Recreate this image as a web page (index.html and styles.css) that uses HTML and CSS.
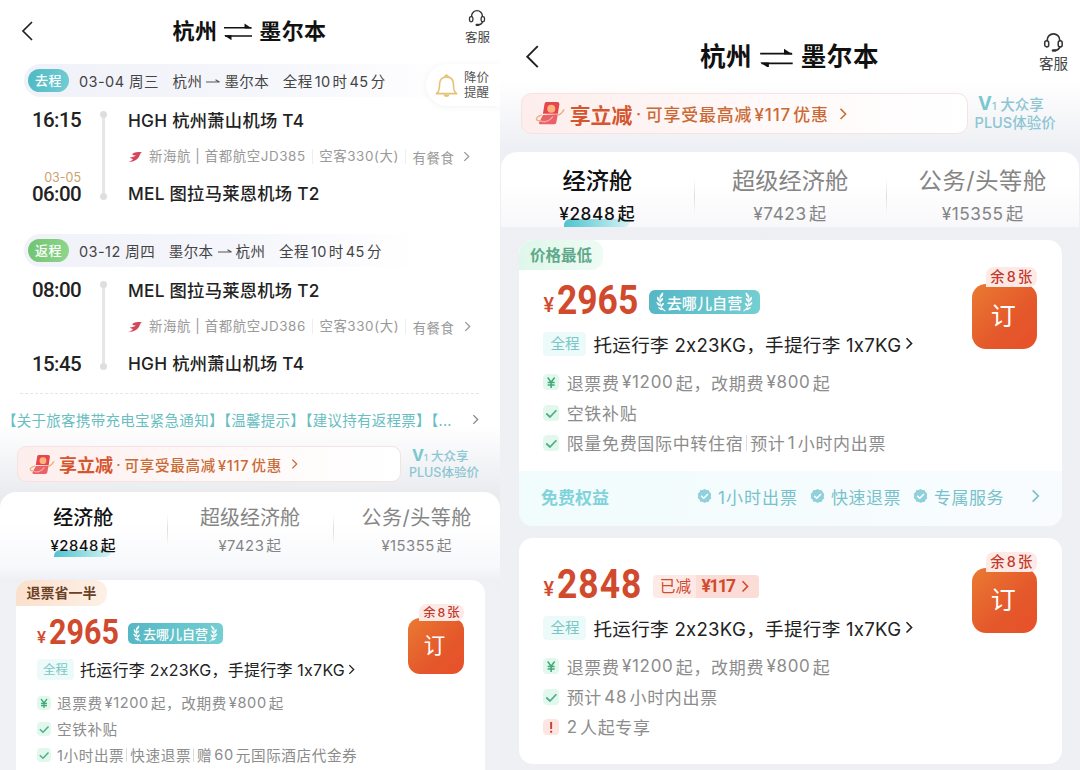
FILE: index.html
```html
<!DOCTYPE html>
<html lang="zh-CN">
<head>
    <meta charset="UTF-8">
    <meta name="viewport" content="width=device-width, initial-scale=1.0">
    <title>杭州 - 墨尔本</title>
    <link rel="stylesheet" href="styles.css">
</head>
<body>
    <svg class="sprite">
        <symbol id="back" viewBox="0 0 12 20"><path d="M11 1 2 10l9 9" fill="none" stroke="#222" stroke-width="1.7"/></symbol>
        <symbol id="swap" viewBox="0 0 30 18"><path d="M1 5.7h27.5M29 14H2" fill="none" stroke="#111" stroke-width="1.5"/><path d="M21.5 1.5 29 6.4h-7.5zM8.5 18.2 1 13.3h7.5z" fill="#111"/></symbol>
        <symbol id="headset" viewBox="0 0 18 18"><path d="M3.6 8V7a5.4 5.4 0 0 1 10.8 0v1M14.6 12.5c-.4 2-1.8 3.2-4.6 3.4" fill="none" stroke="#333" stroke-width="1.4"/><rect x="1.5" y="7.6" width="3.4" height="5.2" rx="1.7" fill="none" stroke="#333" stroke-width="1.3"/><rect x="13.1" y="7.6" width="3.4" height="5.2" rx="1.7" fill="none" stroke="#333" stroke-width="1.3"/><rect x="7.5" y="14.8" width="4" height="2.2" rx="1.1" fill="#333"/></symbol>
        <symbol id="right" viewBox="0 0 8 12"><path d="m1.5 1 5 5-5 5" fill="none" stroke="currentColor" stroke-width="1.5"/></symbol>
        <symbol id="bell" viewBox="0 0 24 26"><path d="M1.5 22c2.5-2 3.2-3.5 3.2-9 0-5 2.5-8.5 7.3-8.5s7.3 3.5 7.3 8.5c0 5.5.7 7 3.2 9z" fill="none" stroke="#e5c273" stroke-width="1.7" stroke-linejoin="round"/><path d="M10.3 4.5a1.7 1.9 0 0 1 3.4 0" fill="none" stroke="#e5c273" stroke-width="1.5"/><path d="M9 23h6a3 2.5 0 0 1-6 0z" fill="#e5c273"/></symbol>
        <symbol id="airline" viewBox="0 0 14 12"><path d="M0 11c2.5-.6 4.2-1.6 5-3C3.500 7.700 2.300 7.300 1.800 6.600 4.300 6.400 6.500 5.600 8 4.600 6.500 4.600 4.800 4 4 3.200 6.500 1 10 .6 14 1.500c-1.600.5-1.800 1.500-2.400 3C10.300 8 7 11 0 11z" fill="#d5465a"/></symbol>
        <symbol id="arrow" viewBox="0 0 14 6"><path d="M0 4h13.5L9.500 1.800" fill="none" stroke="#555" stroke-width="1.1"/></symbol>
        <symbol id="packet" viewBox="0 0 26 22"><path d="M9.5 1h10q2 0 1.8 2l-1.3 8.5H6.500L8 2.500Q8.300 1 9.500 1z" fill="#e3474b"/><path d="m6.500 12.500 13.500-.5-1.500 7.500q-.3 1.500-2 1.500h-12q-2 0-1.500-1.500z" fill="#ea6268"/><path d="M4 18c4 1.500 8 .5 11.500-4" fill="none" stroke="#f5a8a2" stroke-width="1.2"/><circle cx="14" cy="7" r="3.6" fill="#ffb27c"/><path d="M5.500 12.500C-1 15-.5 18.500 4.500 17.500M19.500 13c2.500-.8 4.500-2.300 6-5.500" fill="none" stroke="#eeb07a" stroke-width="1.3"/></symbol>
        <symbol id="yen" viewBox="0 0 14 14"><rect width="14" height="14" rx="4" fill="#e2f8ed"/><path d="m4 3 3 4 3-4M7 7v5M4 7.3h6M4 9.5h6" fill="none" stroke="#3fa978" stroke-width="1.3"/></symbol>
        <symbol id="check" viewBox="0 0 14 14"><rect width="14" height="14" rx="4" fill="#e2f8ed"/><path d="m2.8 7.3 3.2 3 5.5-5.8" fill="none" stroke="#4fae8b" stroke-width="1.5"/></symbol>
        <symbol id="warn" viewBox="0 0 14 14"><rect width="14" height="14" rx="4" fill="#fde6e1"/><path d="M7 2.5v6M7 10v1.8" fill="none" stroke="#c9432f" stroke-width="1.7"/></symbol>
        <symbol id="seal" viewBox="0 0 16 16"><path d="m8 .6 2.2 1 2.4.3.9 2.2 1.7 1.8-.5 2.3.5 2.3-1.8 1.6-1 2.2-2.4.2L8 15.4l-2-1.2-2.4-.2-1-2.2L.8 10.200l.5-2.300L.8 5.900l1.700-1.800.9-2.200 2.400-.3z" fill="#8fd0da"/><path d="m4.500 7.800 2.700 2.600 4.500-4.600" fill="none" stroke="#fff" stroke-width="1.7"/></symbol>
        <symbol id="laurel" viewBox="0 0 9 18"><path d="M8.500 17.500C4.500 15 2.500 9.500 4 3" fill="none" stroke="#fff" stroke-width="1"/><path d="M3.800 5.500C3.300 3.500 4.500 1.300 6.500.3c.5 2.200-.5 4.300-2.700 5.200zM3 9C1.200 8 .5 6 1 4.200 2.800 5.200 3.600 7 3 9zM3.200 9.500c0-2 1.200-3.500 3.300-4 .2 2-1.200 3.500-3.300 4zM4 13C1.800 12.500.5 11 .3 9 2.500 9.500 3.900 11 4 13zM4.300 13.200c0-1.800 1.200-3.200 3-3.500.2 1.900-1.200 3.200-3 3.500zM6.500 16.500c-2.200.2-3.800-.8-4.800-2.600 2.200-.1 4 .7 4.800 2.600z" fill="#fff"/></symbol>
    </svg>

    <div class="screens">
        <!-- flight detail -->
        <section class="screen screen-detail">
            <header class="head">
                <svg class="back"><use href="#back"/></svg>
                <h1>杭州<svg class="swap"><use href="#swap"/></svg>墨尔本</h1>
                <div class="service"><svg><use href="#headset"/></svg><span>客服</span></div>
            </header>

            <div class="trip">
                <div class="leg-bar">
                    <b class="pill go">去程</b>
                    <span class="date">03-04 周三</span>
                    <span class="route">杭州<svg><use href="#arrow"/></svg>墨尔本</span>
                    <span class="total">全程<i>10</i>时<i>45</i>分</span>
                </div>
                <div class="alert"><svg><use href="#bell"/></svg><span>降价<br>提醒</span></div>
                <div class="leg">
                    <div class="times"><time>16:15</time><small>03-05</small><time>06:00</time></div>
                    <div class="line"></div>
                    <div class="stops">
                        <strong>HGH 杭州萧山机场 T4</strong>
                        <p><svg class="logo"><use href="#airline"/></svg><span class="air">新海航 | 首都航空JD385</span><span class="plane">空客330(大)</span><span>有餐食</span><svg class="more"><use href="#right"/></svg></p>
                        <strong>MEL 图拉马莱恩机场 T2</strong>
                    </div>
                </div>
                <div class="leg-bar second">
                    <b class="pill return">返程</b>
                    <span class="date">03-12 周四</span>
                    <span class="route">墨尔本<svg><use href="#arrow"/></svg>杭州</span>
                    <span class="total">全程<i>10</i>时<i>45</i>分</span>
                </div>
                <div class="leg">
                    <div class="times"><time>08:00</time><time>15:45</time></div>
                    <div class="line"></div>
                    <div class="stops">
                        <strong>MEL 图拉马莱恩机场 T2</strong>
                        <p><svg class="logo"><use href="#airline"/></svg><span class="air">新海航 | 首都航空JD386</span><span class="plane">空客330(大)</span><span>有餐食</span><svg class="more"><use href="#right"/></svg></p>
                        <strong>HGH 杭州萧山机场 T4</strong>
                    </div>
                </div>
            </div>

            <div class="notice"><span>【关于旅客携带充电宝紧急通知】【温馨提示】【建议持有返程票】【...</span><svg><use href="#right"/></svg></div>

            <div class="promo">
                <div class="coupon">
                    <svg class="packet"><use href="#packet"/></svg><b>享立减</b><em>·</em><span>可享受最高减<i>¥117</i>优惠</span><svg class="more"><use href="#right"/></svg>
                </div>
                <div class="plus"><p><b>V</b><sub>1</sub> 大众享</p><p>PLUS体验价</p></div>
            </div>

            <div class="tabs">
                <div class="tab active"><h2>经济舱</h2><p>¥2848<i>起</i></p></div>
                <div class="tab"><h2>超级经济舱</h2><p>¥7423<i>起</i></p></div>
                <div class="tab"><h2>公务/头等舱</h2><p>¥15355<i>起</i></p></div>
            </div>

            <article class="card">
                <span class="corner brown">退票省一半</span>
                <div class="price"><small>¥</small><strong>2965</strong>
                    <span class="self"><svg><use href="#laurel"/></svg>去哪儿自营<svg class="flip"><use href="#laurel"/></svg></span>
                </div>
                <div class="bags"><span>全程</span><p>托运行李 2x23KG，手提行李 1x7KG</p><svg><use href="#right"/></svg></div>
                <ul>
                    <li><svg><use href="#yen"/></svg>退票费<i>¥1200</i>起，改期费<i>¥800</i>起</li>
                    <li><svg><use href="#check"/></svg>空铁补贴</li>
                    <li><svg><use href="#check"/></svg>1小时出票<u></u>快速退票<u></u>赠<i>60</i>元国际酒店代金券</li>
                </ul>
                <div class="book"><button>订</button><span>余<i>8</i>张</span></div>
            </article>
        </section>

        <!-- fare list -->
        <section class="screen screen-fares">
            <header class="head">
                <svg class="back"><use href="#back"/></svg>
                <h1>杭州<svg class="swap"><use href="#swap"/></svg>墨尔本</h1>
                <div class="service"><svg><use href="#headset"/></svg><span>客服</span></div>
            </header>

            <div class="promo">
                <div class="coupon">
                    <svg class="packet"><use href="#packet"/></svg><b>享立减</b><em>·</em><span>可享受最高减<i>¥117</i>优惠</span><svg class="more"><use href="#right"/></svg>
                </div>
                <div class="plus"><p><b>V</b><sub>1</sub> 大众享</p><p>PLUS体验价</p></div>
            </div>

            <div class="tabs">
                <div class="tab active"><h2>经济舱</h2><p>¥2848<i>起</i></p></div>
                <div class="tab"><h2>超级经济舱</h2><p>¥7423<i>起</i></p></div>
                <div class="tab"><h2>公务/头等舱</h2><p>¥15355<i>起</i></p></div>
            </div>

            <article class="card with-benefits">
                <span class="corner green">价格最低</span>
                <div class="price"><small>¥</small><strong>2965</strong>
                    <span class="self"><svg><use href="#laurel"/></svg>去哪儿自营<svg class="flip"><use href="#laurel"/></svg></span>
                </div>
                <div class="bags"><span>全程</span><p>托运行李 2x23KG，手提行李 1x7KG</p><svg><use href="#right"/></svg></div>
                <ul>
                    <li><svg><use href="#yen"/></svg>退票费<i>¥1200</i>起，改期费<i>¥800</i>起</li>
                    <li><svg><use href="#check"/></svg>空铁补贴</li>
                    <li><svg><use href="#check"/></svg>限量免费国际中转住宿<u></u>预计<i>1</i>小时内出票</li>
                </ul>
                <div class="benefits">
                    <b>免费权益</b>
                    <span><svg><use href="#seal"/></svg>1小时出票</span>
                    <span><svg><use href="#seal"/></svg>快速退票</span>
                    <span><svg><use href="#seal"/></svg>专属服务</span>
                    <svg class="more"><use href="#right"/></svg>
                </div>
                <div class="book"><button>订</button><span>余<i>8</i>张</span></div>
            </article>

            <article class="card last">
                <div class="price"><small>¥</small><strong>2848</strong>
                    <span class="cut"><span>已减</span><b>¥117<svg><use href="#right"/></svg></b></span>
                </div>
                <div class="bags"><span>全程</span><p>托运行李 2x23KG，手提行李 1x7KG</p><svg><use href="#right"/></svg></div>
                <ul>
                    <li><svg><use href="#yen"/></svg>退票费<i>¥1200</i>起，改期费<i>¥800</i>起</li>
                    <li><svg><use href="#check"/></svg>预计<i>48</i>小时内出票</li>
                    <li><svg><use href="#warn"/></svg>2<i class="gap"></i>人起专享</li>
                </ul>
                <div class="book"><button>订</button><span>余<i>8</i>张</span></div>
            </article>
        </section>
    </div>
</body>
</html>
```

FILE: styles.css
```css
* {
    box-sizing: border-box;
    margin: 0;
    padding: 0;
}
body {
    width: 1080px;
    height: 770px;
    overflow: hidden;
    background: #fff;
    font-family: Inter, "Noto Sans CJK SC", sans-serif;
    color: #222;
}
i, em {
    font-style: normal;
}
svg {
    display: block;
    flex: none;
}
.sprite {
    position: absolute;
    width: 0;
    height: 0;
}
.screens {
    display: flex;
}
/* --u is one design pixel, the fare list is shown larger */
.screen {
    --u: 1px;
    width: 500px;
    height: 770px;
    overflow: hidden;
    display: flex;
    flex-direction: column;
    background: linear-gradient(#fff 425px, #e9ebef 495px, #eff1f5 600px);
}
.screen-fares {
    --u: 1.163px;
    width: 580px;
    background: linear-gradient(#fff 80px, #eeeff4 150px, #eff0f4 300px);
}

/* header */
.head {
    height: 62px;
    flex: none;
    display: flex;
    align-items: center;
    justify-content: space-between;
    padding: 0 10px 0 21px;
}
.screen-fares .head {
    height: 93px;
    padding: 21px 12px 0 25px;
}
.back {
    width: calc(12 * var(--u));
    height: calc(20 * var(--u));
}
.head h1 {
    display: flex;
    align-items: center;
    font-size: calc(22 * var(--u));
    font-weight: 700;
    line-height: 1;
    letter-spacing: calc(0.4 * var(--u));
    color: #111;
    padding-left: 1px;
}
.swap {
    width: calc(30 * var(--u));
    height: calc(18 * var(--u));
    margin: 0 calc(6 * var(--u));
}
.service {
    display: flex;
    flex-direction: column;
    align-items: center;
    gap: calc(3 * var(--u));
    font-size: calc(12.5 * var(--u));
    line-height: calc(15 * var(--u));
    color: #444;
    margin-top: -9px;
}
.service svg {
    width: calc(18 * var(--u));
    height: calc(18 * var(--u));
}

/* trip legs */
.trip {
    position: relative;
    height: 331px;
    flex: none;
    padding-top: 2px;
}
.leg-bar {
    height: 33px;
    margin: 0 20px 0 24px;
    padding-left: 4px;
    display: flex;
    align-items: center;
    border-radius: 17px;
    background: linear-gradient(90deg, #f1f2f9 0, #f5f6fb 50%, #fff 95%);
    font-size: 14.5px;
    letter-spacing: 0.45px;
    color: #444;
    white-space: nowrap;
}
.leg-bar.second {
    margin-top: 21px;
    margin-right: 60px;
}
.pill {
    width: 41px;
    height: 23px;
    border-radius: 12px;
    color: #fff;
    font-size: 13px;
    font-weight: 500;
    line-height: 22px;
    text-align: center;
}
.go {
    background: linear-gradient(100deg, #4fb9c4, #71cdd3);
}
.return {
    background: linear-gradient(100deg, #70c470, #8fd68d);
}
.leg-bar .date {
    margin: 0 13.5px 0 10px;
}
.route {
    display: flex;
    align-items: center;
    margin-right: 13.5px;
}
.route svg {
    width: 14px;
    height: 6px;
    margin: 0 4px;
}
.total i {
    margin: 0 2px;
}
.alert {
    position: absolute;
    right: 0;
    top: 2px;
    width: 74px;
    height: 42px;
    padding-left: 9px;
    display: flex;
    align-items: center;
    gap: 6px;
    background: #fff;
    border-radius: 21px 0 0 21px;
    box-shadow: 0 1px 6px rgba(60, 70, 120, 0.07);
    font-size: 12.5px;
    line-height: 15.5px;
    color: #555;
}
.alert svg {
    width: 23px;
    height: 26px;
}
.leg {
    height: 116px;
    display: flex;
}
.times {
    width: 81px;
    display: flex;
    flex-direction: column;
    text-align: right;
    padding-top: 13px;
    height: 107px;
}
.times time {
    font: 500 20.5px/20px Roboto, sans-serif;
    letter-spacing: -0.6px;
}
.times time:last-child {
    margin-top: auto;
}
.times small {
    margin-top: auto;
    margin-bottom: 1px;
    font-size: 12.5px;
    line-height: 12px;
    color: #c9a36b;
}
.times small + time:last-child {
    margin-top: 0;
    line-height: 18px;
    margin-bottom: 1px;
}
.line {
    width: 3px;
    height: 87px;
    margin: 15px 23px 0 21px;
    background: #e6e6e9;
    position: relative;
}
.line::before, .line::after {
    content: "";
    position: absolute;
    left: -2px;
    top: -1px;
    width: 7px;
    height: 7px;
    border-radius: 50%;
    background: #dedee1;
}
.line::after {
    top: auto;
    bottom: -1px;
}
.stops {
    height: 107px;
    padding-top: 12px;
    white-space: nowrap;
}
.stops strong {
    display: block;
    font-size: 17.3px;
    font-weight: 500;
    line-height: 23px;
    letter-spacing: 0.25px;
}
.stops p {
    display: flex;
    align-items: center;
    height: 50px;
    padding-bottom: 1px;
    font-size: 13.4px;
    letter-spacing: 0.6px;
    color: #999;
}
.logo {
    width: 14px;
    height: 12px;
    margin-right: 7px;
}
.stops .air, .stops .plane {
    margin-right: 6.5px;
    padding-right: 6px;
    border-right: 1px solid #eee;
    line-height: 15px;
}
.stops .more {
    width: 7px;
    height: 11px;
    margin-left: 9px;
}

/* notice */
.notice {
    flex: none;
    height: 53px;
    margin: 0 21px 0 20px;
    padding-bottom: 1px;
    border-top: 1px dashed #e6e6e6;
    display: flex;
    align-items: center;
    justify-content: space-between;
    font-size: 14.5px;
    color: #68bec1;
    white-space: nowrap;
}
.notice span {
    margin-left: -18px;
    letter-spacing: 0.28px;
}
.notice svg {
    width: 7px;
    height: 11px;
    color: #888;
}

/* coupon line */
.promo {
    flex: none;
    display: flex;
    align-items: center;
    height: 36px;
    margin: 0 0 10px 17px;
}
.screen-fares .promo {
    height: 41px;
    margin: 0 0 18px 21px;
}
.coupon {
    width: calc(384 * var(--u));
    height: 100%;
    display: flex;
    align-items: center;
    padding-left: calc(11 * var(--u));
    border: 1px solid #f6e2e2;
    border-radius: calc(9 * var(--u));
    background: linear-gradient(90deg, #fdeeed, #fff9f9 55%, #fff);
    color: #c96a35;
    font-size: calc(14.5 * var(--u));
    font-weight: 500;
    letter-spacing: calc(0.75 * var(--u));
    white-space: nowrap;
}
.packet {
    width: calc(26 * var(--u));
    height: calc(21 * var(--u));
}
.coupon b {
    margin-left: calc(4 * var(--u));
    font-size: calc(18 * var(--u));
    font-weight: 700;
    letter-spacing: 0;
    color: #d5562e;
}
.coupon em {
    width: calc(11.5 * var(--u));
    text-align: center;
}
.coupon i {
    margin: 0 calc(2 * var(--u));
}
.coupon .more {
    width: calc(7 * var(--u));
    height: calc(12 * var(--u));
    margin-left: calc(9 * var(--u));
}
.plus {
    margin-left: calc(8 * var(--u));
    font-size: calc(12.5 * var(--u));
    line-height: calc(15 * var(--u));
    font-weight: 500;
    color: #8dc6d3;
    white-space: nowrap;
}
.screen-fares .plus {
    margin-left: 7px;
}
.plus p:first-child {
    padding-left: calc(3 * var(--u));
}
.plus b {
    font-size: calc(16 * var(--u));
    color: #79c7d0;
}
.plus sub {
    font-size: calc(9 * var(--u));
    vertical-align: baseline;
}

/* cabin tabs */
.tabs {
    flex: none;
    height: 88px;
    display: flex;
    border-radius: 16px 16px 0 0;
    background: linear-gradient(#fff 30px, #f7f8fb 75px, transparent);
    text-align: center;
    color: #858585;
    white-space: nowrap;
}
.screen-fares .tabs {
    height: 75px;
    margin: 0 1px 13px;
    background: linear-gradient(#fff 30px, #f8f8fb);
}
.tab {
    flex: 1;
    position: relative;
    padding-top: calc(11.5 * var(--u));
}
.tab + .tab::before {
    content: "";
    position: absolute;
    left: 0;
    top: calc(22 * var(--u));
    width: 1px;
    height: calc(32 * var(--u));
    background: linear-gradient(transparent, #ddd, transparent);
}
.tab h2 {
    font-size: calc(20 * var(--u));
    font-weight: 400;
    line-height: calc(28 * var(--u));
}
.tab:last-child h2 {
    letter-spacing: calc(0.5 * var(--u));
}
.tab p {
    position: relative;
    font-size: calc(14.8 * var(--u));
    line-height: calc(28 * var(--u));
    letter-spacing: calc(0.5 * var(--u));
}
.tab p i {
    margin-left: calc(2 * var(--u));
}
.active {
    color: #111;
}
.active h2, .active p {
    font-weight: 500;
}
.active p {
    z-index: 1;
}
.active p::after {
    content: "";
    position: absolute;
    z-index: -1;
    left: calc(54 * var(--u));
    top: calc(18.5 * var(--u));
    width: calc(57 * var(--u));
    height: calc(6.5 * var(--u));
    background: linear-gradient(90deg, #4fc3cf, #d5f2f4);
    border-radius: 6px 0 6px 0;
}

/* fare cards */
.card {
    flex: none;
    position: relative;
    height: 220px;
    margin: 0 15px 0 16px;
    padding: calc(35.5 * var(--u)) 0 0 calc(21 * var(--u));
    background: #fff;
    border-radius: 14px;
    white-space: nowrap;
}
.screen-fares .card {
    height: 286px;
    margin: 0 18px 12px 19px;
    overflow: hidden;
}
.screen-fares .last {
    height: 226px;
    padding-top: calc(23.5 * var(--u));
}
.corner {
    position: absolute;
    left: 0;
    top: 0;
    height: calc(26 * var(--u));
    padding: 0 calc(10.5 * var(--u));
    border-radius: 14px 12px 12px 0;
    font-size: calc(14 * var(--u));
    font-weight: 700;
    line-height: calc(26 * var(--u));
}
.brown {
    background: linear-gradient(90deg, #fbe0cd, #fdf0e6);
    color: #6b4126;
}
.green {
    background: linear-gradient(90deg, #dff7ea, #effbf5);
    color: #5fa98a;
    padding: 0 calc(9.5 * var(--u));
    font-size: calc(13.3 * var(--u));
    line-height: calc(27 * var(--u));
}
.price {
    display: flex;
    align-items: center;
    height: calc(33 * var(--u));
    color: #d14a2d;
}
.price small {
    font: 500 calc(17 * var(--u))/1 Roboto, sans-serif;
    width: calc(12 * var(--u));
    padding-top: calc(10 * var(--u));
}
.price strong {
    font: 700 calc(35 * var(--u))/1 Roboto, sans-serif;
    width: calc(79 * var(--u));
    transform: scaleX(0.87);
    transform-origin: 0 50%;
}
.last .price strong {
    letter-spacing: 1.2px;
}
.self {
    display: flex;
    align-items: center;
    width: calc(95 * var(--u));
    height: calc(21 * var(--u));
    justify-content: center;
    gap: calc(1 * var(--u));
    border-radius: calc(5 * var(--u));
    background: linear-gradient(100deg, #55b7c5, #74cfd2);
    color: #fff;
    font-size: calc(13 * var(--u));
    font-weight: 500;
    margin-top: calc(3 * var(--u));
}
.self svg {
    width: calc(8.5 * var(--u));
    height: calc(17 * var(--u));
}
.flip {
    transform: scaleX(-1);
}
.cut {
    display: flex;
    margin-left: calc(3 * var(--u));
    margin-top: calc(3 * var(--u));
    height: calc(20 * var(--u));
    line-height: calc(20 * var(--u));
    border-radius: 4px;
    overflow: hidden;
    background: #fdeae7;
    font-size: calc(13.5 * var(--u));
}
.cut > span {
    padding: 0 calc(4 * var(--u)) 0 calc(6 * var(--u));
}
.cut b {
    display: flex;
    align-items: center;
    width: calc(54 * var(--u));
    padding-left: calc(5 * var(--u));
    background: #fbdcd6;
    font-family: Roboto, sans-serif;
    font-size: calc(15 * var(--u));
    letter-spacing: -1.6px;
}
.cut svg {
    width: calc(7 * var(--u));
    height: calc(11 * var(--u));
    margin-left: calc(6 * var(--u));
}
.bags {
    display: flex;
    align-items: center;
    height: calc(41.5 * var(--u));
}
.bags span {
    width: calc(37 * var(--u));
    height: calc(21 * var(--u));
    margin-right: calc(6 * var(--u));
    border-radius: 4px;
    background: #ecfafa;
    color: #7ac6c6;
    font-size: calc(12.5 * var(--u));
    line-height: calc(21 * var(--u));
    text-align: center;
}
.bags p {
    font-size: calc(16 * var(--u));
    letter-spacing: calc(0.24 * var(--u));
}
.bags svg {
    width: calc(7 * var(--u));
    height: calc(11 * var(--u));
    margin-left: calc(3 * var(--u));
}
.card ul {
    list-style: none;
}
.card li {
    display: flex;
    align-items: center;
    height: calc(26 * var(--u));
    padding-bottom: calc(1 * var(--u));
    font-size: calc(14.6 * var(--u));
    color: #8c8c8c;
    letter-spacing: calc(0.6 * var(--u));
}
.card li svg {
    width: calc(14 * var(--u));
    height: calc(14 * var(--u));
    margin-right: calc(6 * var(--u));
}
.card li i {
    margin: 0 calc(2 * var(--u));
}
.card li .gap {
    margin: 0 calc(1 * var(--u));
}
.card li u {
    width: 1px;
    height: calc(14 * var(--u));
    margin: 0 calc(3 * var(--u)) 0 calc(2 * var(--u));
    background: #ddd;
}
.book {
    position: absolute;
    right: calc(21.5 * var(--u));
    top: calc(23.5 * var(--u));
    width: calc(56 * var(--u));
    padding-top: calc(14 * var(--u));
}
.last .book {
    top: calc(12 * var(--u));
}
.book span {
    position: absolute;
    right: 0;
    top: 0;
    padding: 0 calc(4 * var(--u));
    border-radius: 8px 8px 8px 0;
    background: #fdeae6;
    color: #c2392c;
    font-size: calc(12.3 * var(--u));
    font-weight: 500;
    line-height: calc(17 * var(--u));
}
.book span i {
    margin: 0 calc(2 * var(--u));
}
.book button {
    display: block;
    width: 100%;
    height: calc(56 * var(--u));
    border: none;
    border-radius: calc(12 * var(--u));
    background: linear-gradient(135deg, #ea7a32, #e4582b 60%, #e8502a);
    color: #fff;
    font-family: inherit;
    font-size: calc(21.5 * var(--u));
    padding: 0 calc(2 * var(--u)) calc(4 * var(--u)) 0;
}

/* free benefits */
.benefits {
    position: absolute;
    left: 0;
    right: 0;
    bottom: 0;
    height: 55px;
    padding: 0 22px 5px 22px;
    display: flex;
    align-items: center;
    background: linear-gradient(100deg, #f1fcfd, #f9fcfe);
    color: #78c2cb;
    font-size: 17px;
    letter-spacing: 0.5px;
}
.benefits b {
    margin-right: auto;
    font-weight: 700;
    letter-spacing: 0;
    color: #80d3da;
}
.benefits span {
    display: flex;
    align-items: center;
    gap: 6px;
    margin-left: 12px;
}
.benefits span:nth-child(2) {
    letter-spacing: 1px;
}
.benefits span svg {
    width: 15px;
    height: 16px;
}
.benefits .more {
    width: 9px;
    height: 14px;
    margin-left: 27px;
}
```
